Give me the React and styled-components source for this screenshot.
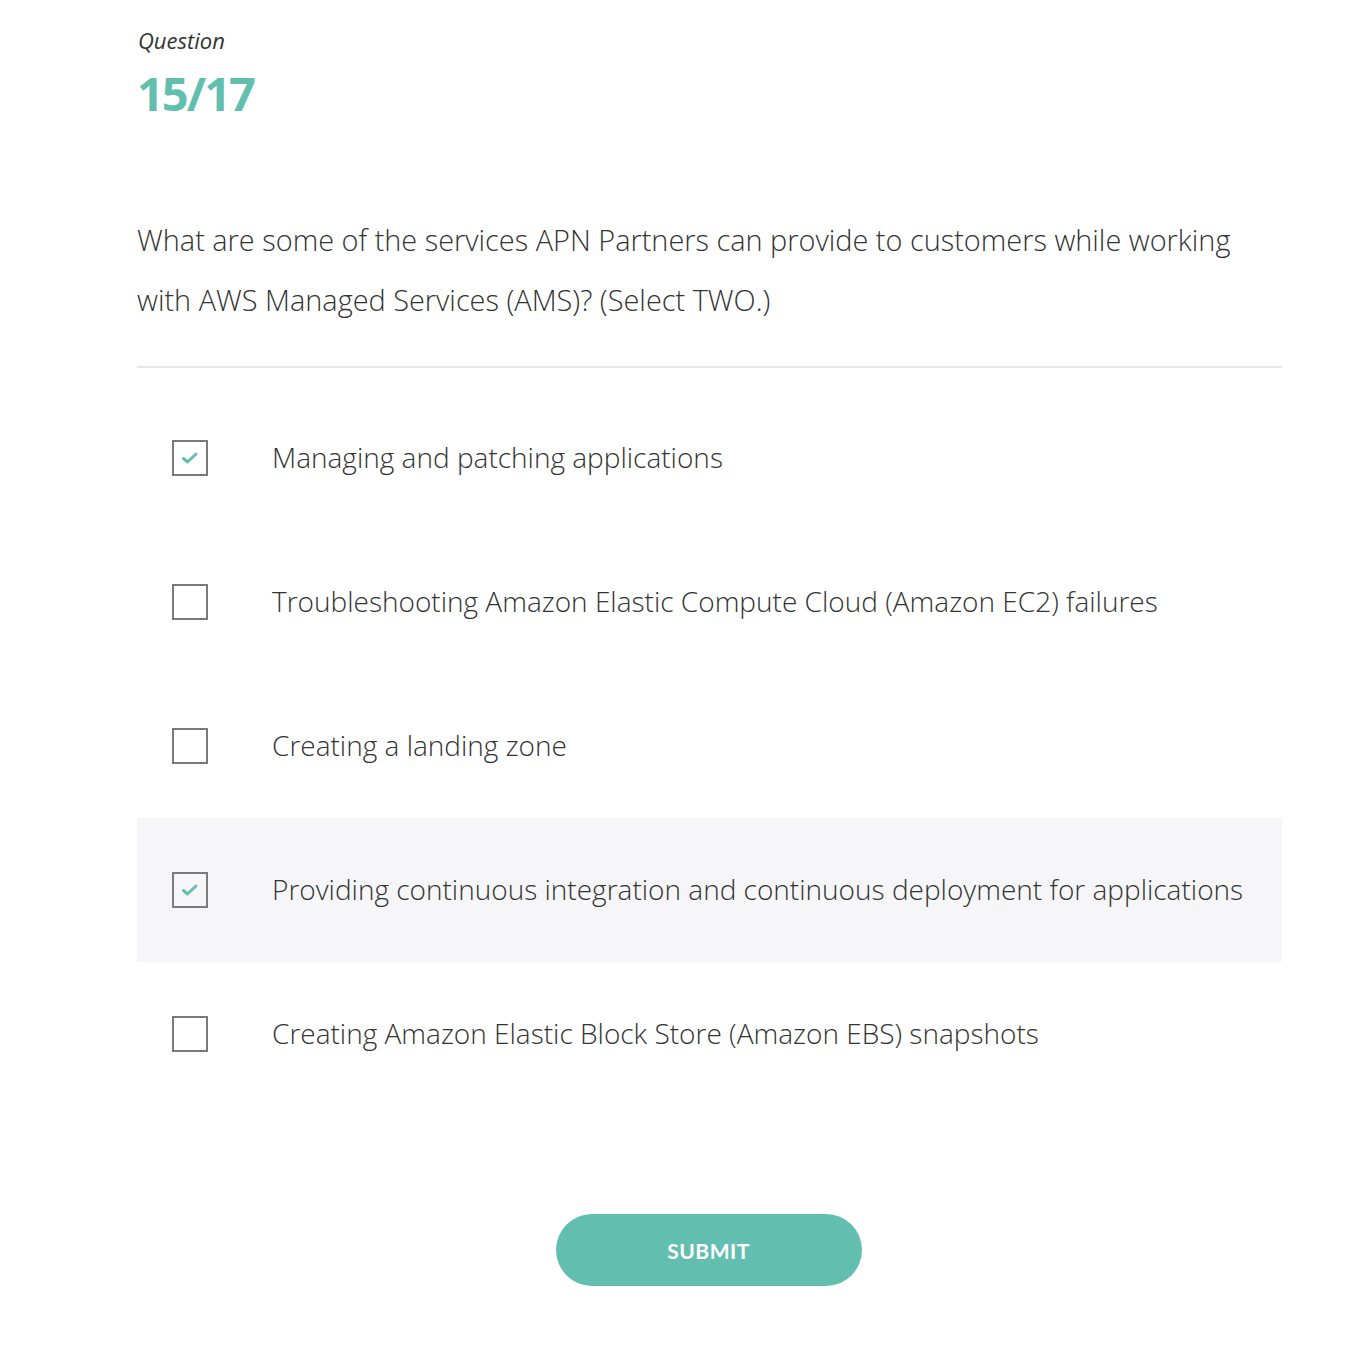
import React, { useState } from 'react';
import styled, { createGlobalStyle } from 'styled-components';

const GlobalStyle = createGlobalStyle`
  html, body {
    margin: 0;
    padding: 0;
    background: #ffffff;
  }
  body {
    font-family: "Open Sans", "Liberation Sans", sans-serif;
  }
`;

const Page = styled.div`
  width: 1145px;
  margin-left: 137px;
  padding-top: 26px;
  padding-bottom: 66px;
`;

const Label = styled.div`
  font-style: italic;
  font-size: 22px;
  color: #333;
  margin-left: 1px;
  line-height: 28px;
`;

const Counter = styled.div`
  font-weight: 700;
  font-size: 47px;
  line-height: 52px;
  letter-spacing: -2px;
  color: #62bfb0;
  margin-top: 13px;
`;

const Prompt = styled.p`
  margin: 91px 0 0;
  max-width: 1120px;
  font-weight: 300;
  font-size: 28.9px;
  line-height: 60px;
  color: #333;
`;

const Divider = styled.hr`
  border: 0;
  border-top: 2px solid #e8e8e8;
  margin: 36px 0 18px;
`;

const OptionList = styled.div`
  display: flex;
  flex-direction: column;
`;

const Option = styled.label`
  display: flex;
  align-items: center;
  height: 144px;
  padding-left: 35px;
  background: ${(p) => (p.$hover ? '#f6f6f8' : 'transparent')};
  cursor: pointer;
`;

const Box = styled.span`
  width: 32px;
  height: 32px;
  border: 2px solid #7a7a7a;
  display: flex;
  align-items: center;
  justify-content: center;
  flex-shrink: 0;
  margin-right: 64px;
`;

const OptionText = styled.span`
  font-weight: 300;
  font-size: 28px;
  color: #333;
  margin-top: -2px;
`;

const Footer = styled.div`
  display: flex;
  justify-content: center;
  margin-top: 108px;
  padding-right: 2px;
`;

const Submit = styled.button`
  width: 306px;
  height: 72px;
  border: 0;
  border-radius: 36px;
  background: #62bfb0;
  color: #fff;
  font-family: Lato, sans-serif;
  font-weight: 700;
  font-size: 21px;
  letter-spacing: 0.5px;
  cursor: pointer;
`;

const Check = () => (
  <svg width="18" height="14" viewBox="0 0 18 14">
    <path d="M2.5 7.5 L6.5 11 L15 3" fill="none" stroke="#62bfb0" strokeWidth="3" strokeLinecap="round" strokeLinejoin="round" />
  </svg>
);

const options = [
  'Managing and patching applications',
  'Troubleshooting Amazon Elastic Compute Cloud (Amazon EC2) failures',
  'Creating a landing zone',
  'Providing continuous integration and continuous deployment for applications',
  'Creating Amazon Elastic Block Store (Amazon EBS) snapshots',
];

export default function App() {
  const [checked, setChecked] = useState([0, 3]);
  const toggle = (i) =>
    setChecked((c) => (c.includes(i) ? c.filter((x) => x !== i) : [...c, i]));

  return (
    <>
      <GlobalStyle />
      <Page>
        <Label>Question</Label>
        <Counter>15/17</Counter>
        <Prompt>
          What are some of the services APN Partners can provide to customers while working with
          AWS Managed Services (AMS)? (Select TWO.)
        </Prompt>
        <Divider />
        <OptionList>
          {options.map((text, i) => (
            <Option key={i} $hover={i === 3} onClick={() => toggle(i)}>
              <Box>{checked.includes(i) && <Check />}</Box>
              <OptionText>{text}</OptionText>
            </Option>
          ))}
        </OptionList>
        <Footer>
          <Submit>SUBMIT</Submit>
        </Footer>
      </Page>
    </>
  );
}
